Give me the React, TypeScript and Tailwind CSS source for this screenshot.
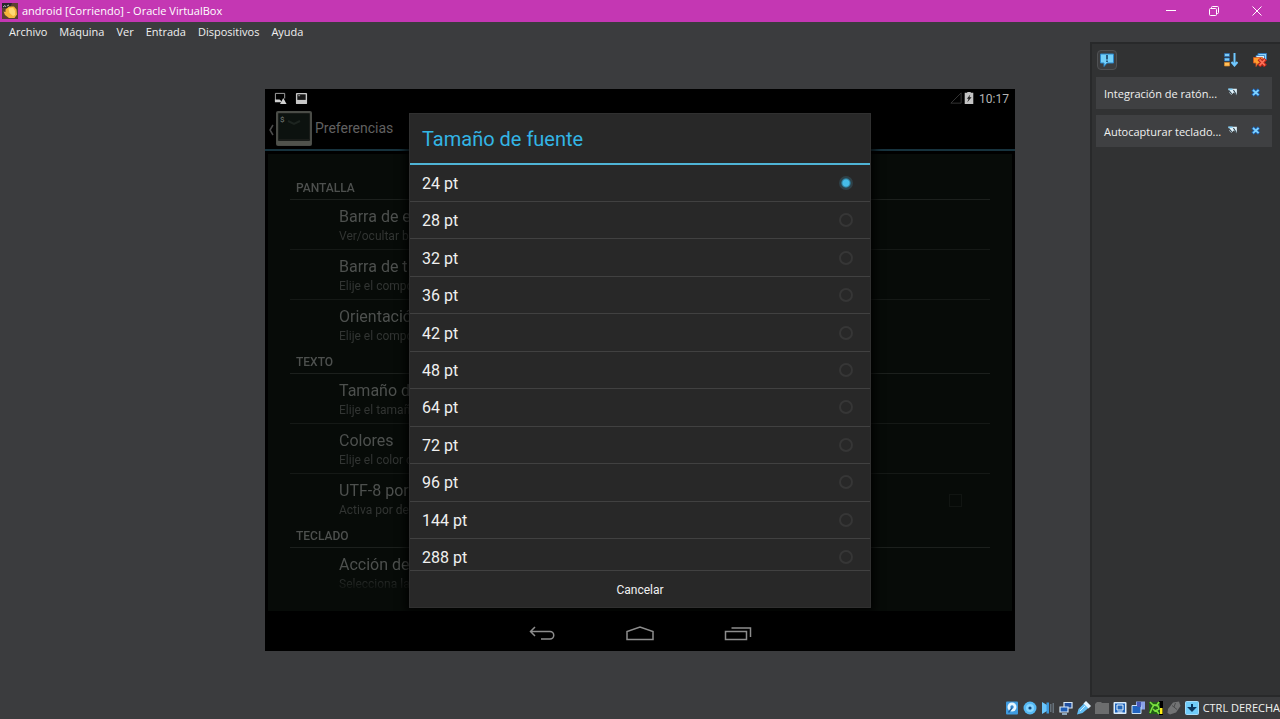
import { useState } from "react";
import type { ReactNode } from "react";

const menus = ["Archivo", "Máquina", "Ver", "Entrada", "Dispositivos", "Ayuda"];
const sizes = [24, 28, 32, 36, 42, 48, 64, 72, 96, 144, 288];

type Pref = { title: string; summary: string; checkbox?: boolean };
const sections: { name: string; items: Pref[] }[] = [
  {
    name: "PANTALLA",
    items: [
      { title: "Barra de e", summary: "Ver/ocultar b" },
      { title: "Barra de t", summary: "Elije el compo" },
      { title: "Orientació", summary: "Elije el compo" },
    ],
  },
  {
    name: "TEXTO",
    items: [
      { title: "Tamaño d", summary: "Elije el tamañ" },
      { title: "Colores", summary: "Elije el color d" },
      { title: "UTF-8 por", summary: "Activa por de", checkbox: true },
    ],
  },
  {
    name: "TECLADO",
    items: [{ title: "Acción de", summary: "Selecciona la" }],
  },
];

function Icon({ children, className = "size-[14px]" }: { children: ReactNode; className?: string }) {
  return (
    <svg viewBox="0 0 14 14" className={`${className} shrink-0`} aria-hidden="true">
      {children}
    </svg>
  );
}

function TitleBar() {
  return (
    <header className="flex h-[22px] shrink-0 items-center bg-[#c437b3] pl-[2px] text-white">
      <svg viewBox="0 0 16 16" className="size-4 shrink-0" aria-hidden="true">
        <rect width="16" height="16" fill="#5a4132" />
        <path d="M0 0h10l-2 5H0z" fill="#26272b" />
        <path d="M1 4l2-1.500 1 1.500M5 3l2-1" stroke="#b8b8b8" fill="none" />
        <path d="M3.500 6.500L7 3.500h5l2.500 3 .5 5-2.500 3.500H7L3 12 1.500 8.500l2 .5z" fill="#f5b53a" />
        <path d="M6.500 5.500l4.500-1L13 8v4l-2 1-3.500-3z" fill="#ffd873" />
      </svg>
      <h1 className="ml-1 flex-1 text-[11px] leading-4">android [Corriendo] - Oracle VirtualBox</h1>
      <button aria-label="Minimizar" className="flex h-full w-[43px] items-center justify-center">
        <svg viewBox="0 0 10 10" className="size-[10px]" fill="none" stroke="#fff"><path d="M0 4.500h10" /></svg>
      </button>
      <button aria-label="Restaurar" className="flex h-full w-[43px] items-center justify-center">
        <svg viewBox="0 0 10 10" className="size-[10px]" fill="none" stroke="#fff">
          <rect x=".5" y="2.500" width="7" height="7" rx="1" />
          <path d="M2.500 2.500V1.500a1 1 0 0 1 1-1h5a1 1 0 0 1 1 1v5a1 1 0 0 1-1 1h-1" />
        </svg>
      </button>
      <button aria-label="Cerrar" className="mr-[2px] flex h-full w-[43px] items-center justify-center">
        <svg viewBox="0 0 10 10" className="size-[10px]" fill="none" stroke="#fff"><path d="M.5.5l9 9M9.500.5l-9 9" /></svg>
      </button>
    </header>
  );
}

function Notice({ text }: { text: string }) {
  return (
    <li className="flex h-8 items-center bg-[#3f4042] pr-[5px] pl-2">
      <span className="min-w-0 flex-1 pt-[2px] text-[11px] leading-4 whitespace-nowrap">{text}</span>
      <button aria-label="No mostrar de nuevo" className="flex w-[23px] shrink-0 justify-center">
        <Icon className="size-3">
          <path d="M1.500 2h10v7.500L8 6.500 5 9 3 7z" fill="#dff1fa" />
          <path d="M2 4l3.500 4M7.500 3.500L11 9" stroke="#31434f" strokeWidth="1.300" />
          <path d="M1.500 2.500h5" stroke="#6cc4f2" strokeWidth="1.500" />
        </Icon>
      </button>
      <button aria-label="Cerrar aviso" className="flex w-[23px] shrink-0 justify-center">
        <Icon className="size-3">
          <path d="M3 3l7.500 7M10.500 3L3 10" stroke="#1c5fb0" strokeWidth="4" />
          <path d="M3.500 3.500l6.500 6M10 3.500l-6.500 6" stroke="#7ed2ff" strokeWidth="2" />
        </Icon>
      </button>
    </li>
  );
}

function Notifications() {
  return (
    <aside aria-label="Notificaciones" className="flex w-[190px] flex-col self-stretch justify-self-end border-2 border-r-0 border-[#28292a] bg-[#313233] pt-[6px] pr-2 pl-1">
      <div className="flex h-[27px] items-start pr-[5px] pl-px">
        <button aria-label="Notificaciones" className="flex size-5 items-center justify-center rounded-sm border border-[#505153] bg-[#3b3c3e]">
          <Icon>
            <path d="M.5 1h13v9H7l-3 3.500V10H.5z" fill="#73d0fa" stroke="#2b84c6" />
            <path d="M7 2v4.500M7 7.500V9" stroke="#0c2c4e" strokeWidth="1.400" />
          </Icon>
        </button>
        <span className="flex-1" />
        <button aria-label="Ordenar" className="mt-[3px] mr-[15px]">
          <Icon>
            <path d="M.5 .5h5v3h-5zM.5 5h5v3h-5z" fill="#7bcbf7" stroke="#2769b0" strokeWidth=".7" />
            <path d="M.5 9.500h5v3.500h-5z" fill="#ffc05a" stroke="#d9862a" strokeWidth=".7" />
            <path d="M10.500 0v12M7.500 9l3 3.500 3-3.500" fill="none" stroke="#6fc8ff" strokeWidth="2" />
          </Icon>
        </button>
        <button aria-label="Borrar todo" className="mt-[3px]">
          <Icon>
            <path d="M5 .5h8.500v6h-9z" fill="#8ed4fb" stroke="#2e75b8" />
            <path d="M3 2.500h8.500v5H3z" fill="#d5effd" stroke="#2e75b8" strokeWidth=".8" />
            <path d="M.5 4.500h9v6H5L3 13.500V10H.5z" fill="#ff9d2e" stroke="#d9541e" strokeWidth=".8" />
            <path d="M6 6l6.500 7M12.500 6L6 13" stroke="#ba2518" strokeWidth="4" />
            <path d="M6.500 6.500l5.500 6M12 6.500l-5.500 6" stroke="#ff7157" strokeWidth="1.800" />
          </Icon>
        </button>
      </div>
      <ul className="flex flex-col gap-[6px]">
        <Notice text="Integración de ratón..." />
        <Notice text="Autocapturar teclado..." />
      </ul>
    </aside>
  );
}

function FontDialog() {
  const [selected, setSelected] = useState(24);
  return (
    <section role="dialog" aria-labelledby="dialog-title" className="flex w-[462px] flex-col border border-[#303030] bg-[#282828] shadow-[0_0_8px_4px_#000000cc]">
      <h2 id="dialog-title" className="flex h-[49px] items-center pt-[2px] pl-3 text-xl text-[#33b5e5]">Tamaño de fuente</h2>
      <div className="h-[2px] bg-[#4fb4d6]" />
      <div className="h-[405px] overflow-hidden">
        <ul className="grid h-[412px] auto-rows-fr">
          {sizes.map((s) => (
            <li key={s} className="border-b border-[#414141]">
              <label className="flex h-full items-center justify-between pr-[17px] pl-3 text-base text-[#f0f0f0]">
                <span className="pt-[2px]">{s} pt</span>
                <input
                  type="radio"
                  name="font-size"
                  checked={selected === s}
                  onChange={() => setSelected(s)}
                  className="size-[14px] appearance-none rounded-full border-2 border-[#363636] checked:border-[#2f4148] checked:bg-[radial-gradient(circle,#46bde9_0_3px,#24566a_5px)]"
                />
              </label>
            </li>
          ))}
        </ul>
      </div>
      <button className="h-[37px] border-t border-[#414141] pt-[2px] text-xs text-[#f0f0f0]">Cancelar</button>
    </section>
  );
}

function Preferences() {
  return (
    <div className="flex-1 bg-black px-[3px] py-[3px]">
      <div className="h-[457px] bg-[#070b08] px-[22px] pt-[22px]">
        <div className="h-[417px] overflow-hidden mask-[linear-gradient(#000_96%,transparent)]">
          {sections.map((sec) => (
            <section key={sec.name}>
              <h3 className="flex h-6 items-center border-b border-[#1c201d] pt-[2px] pl-[6px] text-xs font-medium text-[#4d504e]">{sec.name}</h3>
              <ul className="divide-y divide-[#151916]">
                {sec.items.map((it) => (
                  <li key={it.title} className="flex h-[50px] items-center justify-between pt-[3px] pr-[28px] pl-[49px]">
                    <div className="w-[70px] overflow-hidden whitespace-nowrap">
                      <p className="text-base leading-5 text-[#4d504e]">{it.title}</p>
                      <p className="text-xs leading-[18px] text-[#323533]">{it.summary}</p>
                    </div>
                    {it.checkbox && <input type="checkbox" aria-label={it.title} className="size-[13px] appearance-none border border-[#111512]" />}
                  </li>
                ))}
              </ul>
            </section>
          ))}
        </div>
      </div>
    </div>
  );
}

function AndroidScreen() {
  return (
    <div className="relative flex h-[562px] flex-col bg-black font-[Roboto,sans-serif]">
      <div className="flex h-[19px] shrink-0 items-center pr-[6px] pl-[9px]">
        <Icon className="size-[13px]">
          <path d="M1.500 10V1.500h10V7" fill="none" stroke="#a9a9a9" />
          <path d="M1 8h5l2 2v1H1z" fill="#d0d0d0" />
          <path d="M10 6.500l3.500 6.500h-7z" fill="#d0d0d0" />
        </Icon>
        <Icon className="ml-2 size-[13px]">
          <rect x="1" y="1" width="12" height="12" rx="1" fill="#c8c8c8" />
          <path d="M2.500 2.500h9v6h-9z" fill="#161616" />
          <path d="M3.500 4h2" stroke="#aaa" />
        </Icon>
        <span className="flex-1" />
        <Icon className="size-3"><path d="M13 1v12H1z" fill="none" stroke="#3c3c3c" /></Icon>
        <Icon className="ml-px size-3">
          <path d="M5 0h4v1h3v13H2V1h3z" fill="#c4c4c4" />
          <path d="M8.500 3L4.500 8h2L5 12l5-6H7.500z" fill="#202020" />
        </Icon>
        <time className="ml-1 pt-px text-xs leading-4 text-[#b4b4b4]">10:17</time>
      </div>
      <div className="flex h-[43px] shrink-0 items-start border-b-2 border-[#17333e] pt-[2px] pl-[3px]">
        <button aria-label="Volver" className="flex h-10 items-center">
          <svg viewBox="0 0 6 12" className="h-3 w-[6px]" fill="none" stroke="#4b4b4b" strokeWidth="1.500"><path d="M5 1L2 6l3 5" /></svg>
        </button>
        <svg viewBox="0 0 38 38" className="ml-px size-[38px]" aria-hidden="true">
          <rect x="1" y="1" width="36" height="35" rx="2" fill="#4a4c47" />
          <rect x="3" y="3" width="32" height="28" rx="1" fill="#191c19" />
          <path d="M4 4h30v25H4z" fill="#0c120f" />
          <path d="M13 11l6 3 6-3" fill="none" stroke="#1d2420" strokeWidth="2" />
          <path d="M2 31h34v4H2z" fill="#50524c" />
          <text x="5" y="12" fontSize="8" fill="#7a7f7b">$</text>
        </svg>
        <p className="ml-[2px] text-sm leading-9 text-[#616161]">Preferencias</p>
      </div>
      <Preferences />
      <nav className="flex h-[37px] shrink-0 items-center justify-center gap-[70px] pt-[3px]">
        <button aria-label="Atrás">
          <svg viewBox="0 0 28 16" className="h-4 w-7" fill="none" stroke="#8d8d8d" strokeWidth="1.500"><path d="M7 1L2.500 5.500 7 10M2.500 5.500H22a3.700 3.700 0 0 1 0 7.500H13" /></svg>
        </button>
        <button aria-label="Inicio">
          <svg viewBox="0 0 28 16" className="h-4 w-7" fill="none" stroke="#8d8d8d" strokeWidth="1.500"><path d="M1 13.500V5.500L14 1l13 4.500v8z" /></svg>
        </button>
        <button aria-label="Recientes">
          <svg viewBox="0 0 28 16" className="h-4 w-7" fill="none" stroke="#8d8d8d" strokeWidth="1.500"><path d="M1.500 5.500h21v8h-21zM7.500 2h19v9" /></svg>
        </button>
      </nav>
      <div className="absolute inset-x-0 top-6 flex justify-center">
        <FontDialog />
      </div>
    </div>
  );
}

function StatusBar() {
  return (
    <footer className="flex h-[22px] shrink-0 items-center justify-end gap-1">
      <Icon>
        <rect x="1" y=".5" width="12" height="13" rx="1" fill="#3f9be0" />
        <circle cx="7" cy="6" r="4.500" fill="#e5f6ff" /><circle cx="7" cy="6" r="1.700" fill="#3586cc" />
        <path d="M3.500 11.500L7 7" stroke="#1c5f9f" strokeWidth="1.500" />
      </Icon>
      <Icon><circle cx="7" cy="7" r="6.500" fill="#55b9f5" /><circle cx="7" cy="7" r="4" fill="#85d5ff" /><circle cx="7" cy="7" r="1.600" fill="#0f487f" /></Icon>
      <Icon><path d="M1 1l5 3v6l-5 3z" fill="#69c5fb" /><path d="M5.500 1.500H8v11H5.500z" fill="#3c9ade" /><path d="M9 3h1.500v8H9zM11.500 2H13v10h-1.500z" fill="#66717a" /></Icon>
      <Icon>
        <path d="M5 1.500h8v5.500H5z" fill="#214f9f" stroke="#d5e6f5" strokeWidth="1.200" />
        <path d="M1 6h8v5H1z" fill="#1e5cb5" stroke="#d5e6f5" strokeWidth="1.200" /><path d="M3 13h5" stroke="#a7c9e5" strokeWidth="1.500" />
      </Icon>
      <Icon><path d="M0 13.500L1.500 8l6-6L12 6.500 5.500 12z" fill="#63bef5" /><path d="M9 0l5 5-2.500 2.500-5-5z" fill="#e2f3ff" /><path d="M3 10l5-5" stroke="#d2f0ff" /></Icon>
      <Icon><path d="M0 3l2-2h4l1 1h7v11H0z" fill="#6c6d6e" /></Icon>
      <Icon><rect x=".5" y="1" width="13" height="12" rx="1" fill="#d9ecfb" /><path d="M2 2.500h10v9H2z" fill="#1f65bd" /><path d="M4 4h6v5H4z" fill="#2466b5" stroke="#e9f6ff" /><path d="M4.500 11h5" stroke="#fff" /></Icon>
      <Icon><path d="M5 .5h9v8H5z" fill="#8aa2e8" /><path d="M1 4.500h9v8H1z" fill="#2163bf" stroke="#c9e1f5" /><path d="M6 1h4v5H6z" fill="#4658b8" /></Icon>
      <Icon>
        <rect x="10" y="0" width="4" height="14" fill="#000" />
        <path d="M0 1h11v12H0z" fill="#235d19" />
        <path d="M1 1l3 3h4l2-3M1 12l2-5 2-3 4 1 1 3-4 2-2-2M10 13L7 9" fill="none" stroke="#7be33f" strokeWidth="1.600" />
        <path d="M11 7h2.500v6H11z" fill="#ffee16" />
      </Icon>
      <Icon><path d="M1 8l5-6.500L12 .5 13.500 5 9 11.500 3 13.500.5 12z" fill="#727374" /><path d="M5 4.500l5 4M8.500 2L7 6" stroke="#4a4b4c" /></Icon>
      <Icon><rect x=".5" y=".5" width="13" height="13" rx="1" fill="#70ccfa" stroke="#a4dcfb" /><path d="M7 3v4M4.500 7L7 9.500 9.500 7z" stroke="#0b355d" strokeWidth="2" fill="#0b355d" /></Icon>
      <span className="text-[11px] leading-4 whitespace-nowrap">CTRL DERECHA</span>
    </footer>
  );
}

export default function App() {
  return (
    <div className="flex min-h-screen flex-col bg-[#3b3c3e] font-['Open_Sans','Noto_Sans',sans-serif] text-[#f0f0f0]">
      <TitleBar />
      <nav className="flex h-5 shrink-0 items-center gap-3 pl-[9px] text-[11px] leading-4">
        {menus.map((m) => (
          <button key={m}>{m}</button>
        ))}
      </nav>
      <main className="grid flex-1 grid-cols-[1fr_750px_1fr] items-center">
        <div />
        <AndroidScreen />
        <Notifications />
      </main>
      <StatusBar />
    </div>
  );
}
